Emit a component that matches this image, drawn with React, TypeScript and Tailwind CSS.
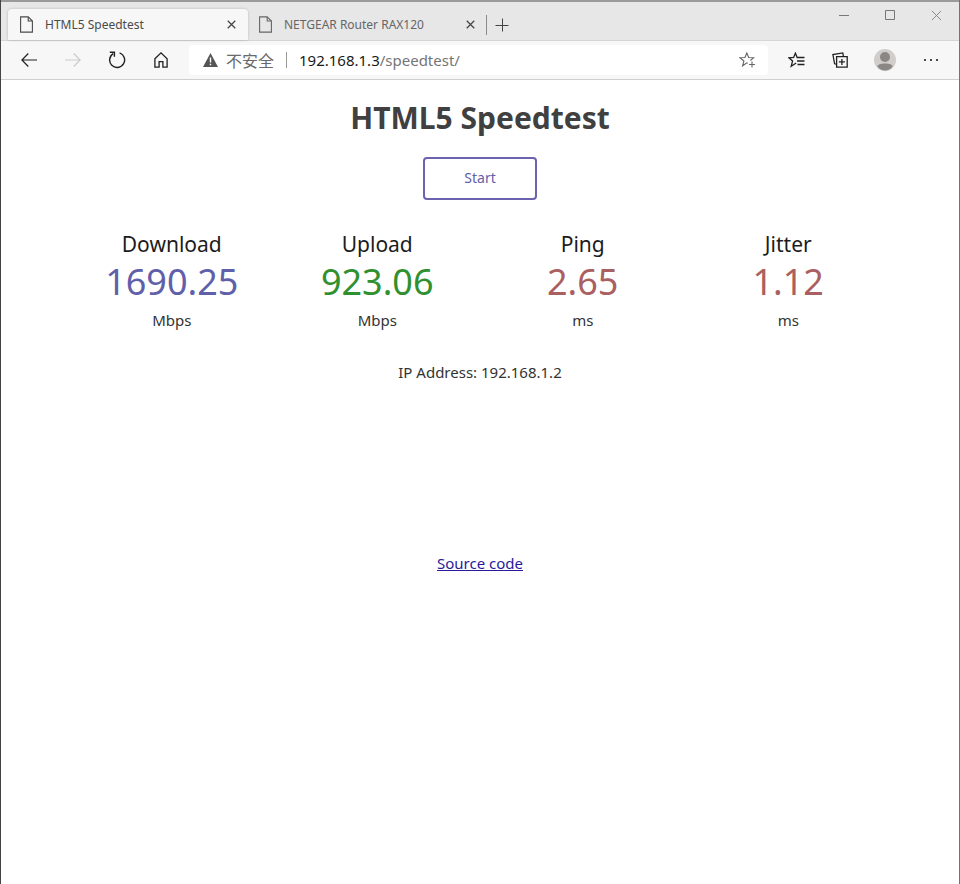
import type { ReactNode } from "react";

function PageIcon() {
  return (
    <svg width="13" height="17" viewBox="0 0 13 17" fill="none" stroke="currentColor" strokeWidth="1.1" className="shrink-0">
      <path d="M.6 .9h7.6L12.400 5v11.100H.6z" />
      <path d="M8.200 .9V5h4.200" />
    </svg>
  );
}

function Cross({ size, width }: { size: number; width: number }) {
  return (
    <svg width={size} height={size} viewBox="0 0 10 10" fill="none" stroke="currentColor" strokeWidth={width}>
      <path d="M.8 .8l8.4 8.4M9.2 .8L.8 9.2" />
    </svg>
  );
}

function Tab({ title, active }: { title: string; active?: boolean }) {
  return (
    <div
      className={
        active
          ? "flex w-60 items-center rounded-t-sm bg-[#f7f7f7] px-3 text-[#4a4a4a] shadow-[0_0_3px_rgba(0,0,0,0.2)]"
          : "flex w-[238px] items-center px-[11px] text-[#666666]"
      }
    >
      <PageIcon />
      <span className="ml-3 flex-1 text-xs whitespace-nowrap">{title}</span>
      <button type="button" aria-label={`Close ${title}`} className="text-[#444444]">
        <Cross size={9} width={1.4} />
      </button>
    </div>
  );
}

function IconButton({ label, className = "", children }: { label: string; className?: string; children: ReactNode }) {
  return (
    <button type="button" aria-label={label} className={`flex h-8 w-11 items-center justify-center text-[#222222] ${className}`}>
      {children}
    </button>
  );
}

function TabStrip() {
  return (
    <div className="flex h-[41px] border-t-2 border-b border-t-[#9a9a9a] border-b-[#d6d6d6] bg-[#e7e7e7]">
      <div className="flex pt-[7px] pl-[7px]">
        <Tab title="HTML5 Speedtest" active />
        <Tab title="NETGEAR Router RAX120" />
        <div className="flex items-center">
          <span className="h-5 w-px bg-[#8a8a8a]" />
          <button type="button" aria-label="New tab" className="ml-2 text-[#444444]">
            <svg width="14" height="14" viewBox="0 0 14 14" fill="none" stroke="currentColor">
              <path d="M7.5 .5v13M.5 7.5h13" />
            </svg>
          </button>
        </div>
      </div>
      <div className="ml-auto flex h-[26px] text-[#777777]">
        <button type="button" aria-label="Minimize" className="flex w-[46px] items-center justify-center">
          <svg width="10" height="10" viewBox="0 0 10 10" stroke="currentColor">
            <path d="M0 5.5h10" />
          </svg>
        </button>
        <button type="button" aria-label="Maximize" className="flex w-[46px] items-center justify-center">
          <svg width="10" height="10" viewBox="0 0 10 10" fill="none" stroke="currentColor">
            <path d="M.5 .5h9v9h-9z" />
          </svg>
        </button>
        <button type="button" aria-label="Close window" className="flex w-[46px] items-center justify-center text-[#8a8a8a]">
          <Cross size={11} width={0.9} />
        </button>
      </div>
    </div>
  );
}

function Toolbar() {
  return (
    <div className="flex h-[39px] items-center border-b border-[#cfcfcf] bg-[#f7f7f7] px-1.5">
      <IconButton label="Back">
        <svg width="16" height="14" viewBox="0 0 16 14" fill="none" stroke="currentColor" strokeWidth="1.2">
          <path d="M7.3 .5L.9 7l6.4 6.5M1 7h15" />
        </svg>
      </IconButton>
      <IconButton label="Forward" className="opacity-20">
        <svg width="16" height="14" viewBox="0 0 16 14" fill="none" stroke="currentColor" strokeWidth="1.2">
          <path d="M8.7 .5L15.1 7l-6.4 6.5M15 7H0" />
        </svg>
      </IconButton>
      <IconButton label="Reload">
        <svg width="18" height="18" viewBox="0 0 18 18" fill="none" stroke="currentColor" strokeWidth="1.4">
          <path d="M11.6 1.9A7.5 7.5 0 1 1 5.2 2.6" />
          <path d="M1.8 1.3h4.6v4.4" />
        </svg>
      </IconButton>
      <IconButton label="Home">
        <svg width="14" height="16" viewBox="0 0 14 16" fill="none" stroke="currentColor" strokeWidth="1.3">
          <path d="M.9 6.7L7 .9l6.1 5.8v8.4H8.9V9.6H5.1v5.5H.9z" />
        </svg>
      </IconButton>
      <div className="ml-1.5 flex h-[30px] flex-1 items-center rounded-sm bg-white pr-3 pl-3.5">
        <svg width="15" height="14" viewBox="0 0 15 14" className="shrink-0">
          <path d="M7.5 0L15 14H0z" fill="#555555" />
          <path d="M7.5 4.5v5M7.5 10.7v1.6" stroke="#ffffff" strokeWidth="1.4" />
        </svg>
        <span className="ml-2 font-['Noto_Sans_CJK_SC',sans-serif] text-base leading-6 whitespace-nowrap text-[#6a6a6a]">不安全</span>
        <span className="ml-3 h-4 w-px bg-[#999999]" />
        <span className="ml-3 flex-1 text-[15px] whitespace-nowrap text-[#757575]">
          <span className="text-[#1a1a1a]">192.168.1.3</span>/speedtest/
        </span>
        <button type="button" aria-label="Add to favorites" className="text-[#666666]">
          <svg width="17" height="16" viewBox="0 0 17 16" fill="none" stroke="currentColor" strokeWidth="1.1">
            <path d="M8.800 11.400L7.800 10.800 3.600 13.800 4.900 9 1 5.800l4.900-.3L7.800 1l1.900 4.500 4.900.3-3.200 2.700" />
            <path d="M13 9.500v6M10 12.500h6" />
          </svg>
        </button>
      </div>
      <IconButton label="Favorites" className="ml-1.5">
        <svg width="17" height="16" viewBox="0 0 17 16" fill="none" stroke="currentColor" strokeWidth="1.3">
          <path d="M8.2 11L3.2 14.2 4.6 9 .9 5.8l4.7-.3L7.4 1.2l1.8 4.3H16.5" />
          <path d="M9 9h7.5M9.5 12.5h7" />
        </svg>
      </IconButton>
      <IconButton label="Collections">
        <svg width="16" height="16" viewBox="0 0 16 16" fill="none" stroke="currentColor" strokeWidth="1.3">
          <path d="M4.6 4.6h10.6v10.6H4.6zM9.9 6.9v6M6.9 9.9h6" />
          <path d="M4.3 12.2L2.6 11.8.9 2.6 10.8.9l.6 3.4" />
        </svg>
      </IconButton>
      <IconButton label="Profile" className="ml-px">
        <svg width="22" height="22" viewBox="0 0 22 22">
          <circle cx="11" cy="11" r="11" fill="#d0cdca" />
          <circle cx="11" cy="8" r="5" fill="#8a8785" />
          <path d="M3.4 17.6c0-2.1 3.2-3.2 7.6-3.2s7.6 1.1 7.6 3.2C16.700 20.200 14 21.500 11 21.500s-5.700-1.300-7.600-3.900z" fill="#8a8785" />
        </svg>
      </IconButton>
      <IconButton label="Settings and more" className="ml-0.5">
        <svg width="16" height="4" viewBox="0 0 16 4" fill="currentColor">
          <circle cx="2" cy="2" r="1.1" />
          <circle cx="8" cy="2" r="1.1" />
          <circle cx="14" cy="2" r="1.1" />
        </svg>
      </IconButton>
    </div>
  );
}

function Metric({ name, value, unit, color }: { name: string; value: string; unit: string; color: string }) {
  return (
    <div className="text-center">
      <div className="text-[21px] leading-7 text-[#1c1c1c]">{name}</div>
      <div className={`text-4xl leading-[48px] ${color}`}>{value}</div>
      <div className="text-[15px] leading-7 text-[#333333]">{unit}</div>
    </div>
  );
}

export default function App() {
  return (
    <div className="flex min-h-screen flex-col border-r border-l border-r-[#6b7385] border-l-[#444444] bg-white font-['Noto_Sans',sans-serif]">
      <header>
        <TabStrip />
        <Toolbar />
      </header>
      <main className="flex flex-col items-center">
        <h1 className="mt-4 text-3xl leading-[44px] font-bold text-[#404040]">HTML5 Speedtest</h1>
        <button type="button" className="mt-[17px] h-[43px] w-[114px] rounded-sm border-2 border-[#6b63b0] pb-0.5 text-sm text-[#6060aa]">
          Start
        </button>
        <section className="mt-[30px] grid w-full max-w-[822px] grid-cols-4">
          <Metric name="Download" value="1690.25" unit="Mbps" color="text-[#6060aa]" />
          <Metric name="Upload" value="923.06" unit="Mbps" color="text-[#309030]" />
          <Metric name="Ping" value="2.65" unit="ms" color="text-[#aa6060]" />
          <Metric name="Jitter" value="1.12" unit="ms" color="text-[#aa6060]" />
        </section>
        <p className="mt-6 text-[15px] leading-7 text-[#333333]">IP Address: 192.168.1.2</p>
        <a href="#source" className="mt-[163px] text-[15px] leading-7 text-[#2a1a9a] underline">
          Source code
        </a>
      </main>
    </div>
  );
}
